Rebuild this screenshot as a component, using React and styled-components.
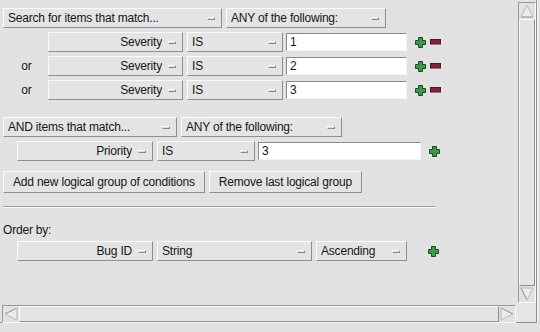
import styled, { createGlobalStyle } from 'styled-components'

const GlobalStyle = createGlobalStyle`
  html, body {
    margin: 0;
    padding: 0;
    background: #e2e2e2;
  }
  body {
    font-family: "Liberation Sans", Arial, sans-serif;
    font-size: 12px;
    color: #161616;
    letter-spacing: -0.2px;
  }
`

const conditionGroups = [
  {
    lead: 'Search for items that match...',
    leadWidth: 219,
    anyWidth: 160,
    rows: [
      { field: 'Severity', op: 'IS', value: '1' },
      { field: 'Severity', op: 'IS', value: '2' },
      { field: 'Severity', op: 'IS', value: '3' },
    ],
  },
]

const PlusIcon = () => (
  <svg width="11" height="11" viewBox="0 0 11 11">
    <polygon
      points="3.5,0.5 7.5,0.5 7.5,3.5 10.5,3.5 10.5,7.5 7.5,7.5 7.5,10.5 3.5,10.5 3.5,7.5 0.5,7.5 0.5,3.5 3.5,3.5"
      fill="#3f9a48"
      stroke="#1d4a22"
      strokeWidth="1"
    />
  </svg>
)

const MinusIcon = () => (
  <svg width="11" height="6" viewBox="0 0 11 6">
    <rect x="0.5" y="0.5" width="10" height="4.5" fill="#8e1e34" stroke="#4a1420" strokeWidth="1" />
  </svg>
)

const Arrow = ({ dir }) => {
  const pts = {
    up: '2,14 8,2 14,14',
    down: '2,2 14,2 8,14',
    left: '14,2 14,14 2,8',
    right: '2,2 2,14 14,8',
  }[dir]
  return (
    <ArrowBox>
      <svg width="16" height="16" viewBox="0 0 16 16">
        <polygon points={pts} fill="#ececec" stroke="#8c8c8c" strokeWidth="1" />
        <polyline points={pts} fill="none" stroke="#fbfbfb" strokeWidth="0.6" />
      </svg>
    </ArrowBox>
  )
}

const OptionMenu = ({ w, align, children }) => (
  <Menu $w={w} $align={align}>
    <MenuText $align={align}>{children}</MenuText>
    <Indicator />
  </Menu>
)

const App = () => {
  return (
    <>
      <GlobalStyle />
      <Window>
        <Canvas>
          {conditionGroups.map((g) => (
            <div key={g.lead}>
              <Row>
                <OptionMenu w={g.leadWidth}>{g.lead}</OptionMenu>
                <OptionMenu w={g.anyWidth}>ANY of the following:</OptionMenu>
              </Row>
              {g.rows.map((r, i) => (
                <Row key={i} $top={4}>
                  <OrLabel $w={45}>{i > 0 ? 'or' : ''}</OrLabel>
                  <OptionMenu w={135} align="right">{r.field}</OptionMenu>
                  <OptionMenu w={96}>{r.op}</OptionMenu>
                  <Entry $w={121}>{r.value}</Entry>
                  <Icons $left={4}>
                    <PlusIcon />
                    <MinusIcon />
                  </Icons>
                </Row>
              ))}
            </div>
          ))}

          <Row $top={17}>
            <OptionMenu w={174}>AND items that match...</OptionMenu>
            <OptionMenu w={161}>ANY of the following:</OptionMenu>
          </Row>
          <Row $top={4}>
            <OrLabel $w={14} />
            <OptionMenu w={136} align="right">Priority</OptionMenu>
            <OptionMenu w={98}>IS</OptionMenu>
            <Entry $w={163}>3</Entry>
            <Icons $left={4}>
              <PlusIcon />
            </Icons>
          </Row>

          <Row $top={10}>
            <Button>Add new logical group of conditions</Button>
            <Button>Remove last logical group</Button>
          </Row>

          <Separator />

          <Label>Order by:</Label>
          <Row $top={4}>
            <OrLabel $w={14} />
            <OptionMenu w={136} align="right">Bug ID</OptionMenu>
            <OptionMenu w={155}>String</OptionMenu>
            <OptionMenu w={91}>Ascending</OptionMenu>
            <Icons $left={17}>
              <PlusIcon />
            </Icons>
          </Row>
        </Canvas>

        <VScroll>
          <Arrow dir="up" />
          <Slider />
          <Arrow dir="down" />
        </VScroll>
        <HScroll>
          <Arrow dir="left" />
          <Slider />
          <Arrow dir="right" />
        </HScroll>
        <Corner />
      </Window>
    </>
  )
}

const Window = styled.div`
  width: 536px;
  height: 322px;
  display: grid;
  grid-template-columns: 516px 20px;
  grid-template-rows: 303px 19px;
  border-right: 1px solid #8f8f8f;
  border-bottom: 1px solid #8f8f8f;
  box-shadow: 1px 1px 0 #f4f4f4;
`

const Canvas = styled.div`
  padding: 8px 0 0 3px;
  display: flex;
  flex-direction: column;
  overflow: hidden;
`

const Row = styled.div`
  display: flex;
  align-items: center;
  gap: 4px;
  margin-top: ${(p) => p.$top || 0}px;
`

const OrLabel = styled.div`
  width: ${(p) => p.$w}px;
  flex: none;
  text-align: center;
  margin-right: -4px;
  padding-left: 2px;
  box-sizing: border-box;
`

const Menu = styled.div`
  width: ${(p) => p.$w}px;
  height: 20px;
  flex: none;
  box-sizing: border-box;
  display: flex;
  align-items: center;
  padding: 0 6px 0 4px;
  gap: 6px;
  border: 1px solid;
  border-color: #fafafa #8e8e8e #8e8e8e #fafafa;
  background: #e4e4e4;
  white-space: nowrap;
`

const MenuText = styled.span`
  flex: 1;
  text-align: ${(p) => (p.$align === 'right' ? 'right' : 'left')};
  overflow: hidden;
`

const Indicator = styled.span`
  width: 8px;
  height: 3px;
  flex: none;
  box-sizing: border-box;
  border: 1px solid;
  border-color: #fafafa #8a8a8a #8a8a8a #fafafa;
  background: #d8d8d8;
  margin-top: 1px;
`

const Entry = styled.div`
  width: ${(p) => p.$w}px;
  height: 18px;
  flex: none;
  box-sizing: border-box;
  margin-left: -1px;
  padding: 0 3px;
  display: flex;
  align-items: center;
  background: #ffffff;
  border: 1px solid;
  border-color: #8a8a8a #f2f2f2 #f2f2f2 #8a8a8a;
`

const Icons = styled.div`
  display: flex;
  align-items: center;
  gap: 4px;
  margin-left: ${(p) => p.$left}px;
`

const Button = styled.div`
  height: 22px;
  box-sizing: border-box;
  padding: 0 9px;
  display: flex;
  align-items: center;
  border: 1px solid;
  border-color: #fafafa #8e8e8e #8e8e8e #fafafa;
  background: #e4e4e4;
  white-space: nowrap;
`

const Separator = styled.div`
  width: 432px;
  margin-top: 13px;
  border-top: 1px solid #9a9a9a;
  border-bottom: 1px solid #fafafa;
`

const Label = styled.div`
  margin-top: 15px;
  line-height: 14px;
`

const VScroll = styled.div`
  margin: 2px 0 0 2px;
  width: 16px;
  display: flex;
  flex-direction: column;
  border: 1px solid;
  border-color: #9a9a9a #f8f8f8 #f8f8f8 #9a9a9a;
`

const HScroll = styled.div`
  margin: 2px 0 0 2px;
  height: 16px;
  display: flex;
  border: 1px solid;
  border-color: #9a9a9a #f8f8f8 #f8f8f8 #9a9a9a;
`

const Slider = styled.div`
  flex: 1;
  box-sizing: border-box;
  border: 1px solid;
  border-color: #fafafa #8e8e8e #8e8e8e #fafafa;
  background: #e4e4e4;
`

const ArrowBox = styled.div`
  width: 16px;
  height: 16px;
  flex: none;
  display: flex;
`

const Corner = styled.div`
  background: #e6e6e6;
`

export default App
